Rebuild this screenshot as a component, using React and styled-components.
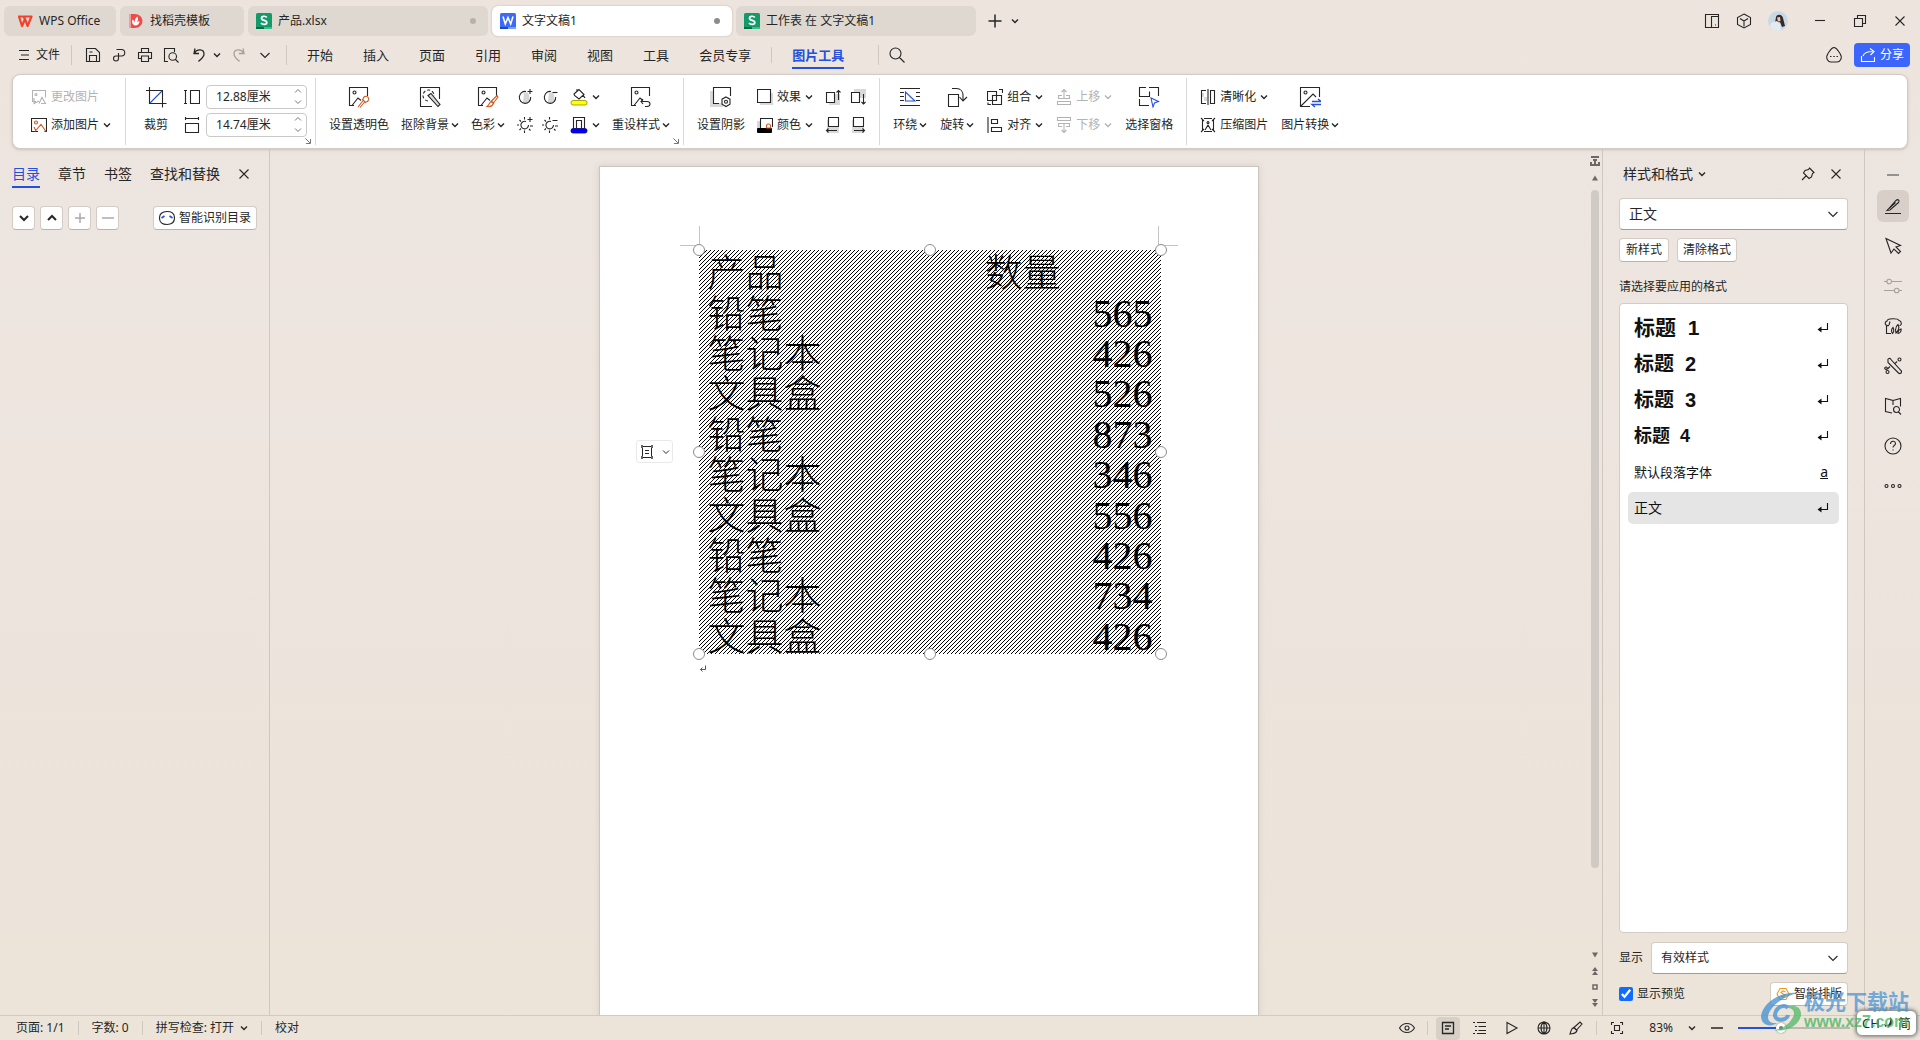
import React from "react";
import styled, { createGlobalStyle, css } from "styled-components";

const blue = "#2450dc";
const orange = "#d2591f";
const line = "#cfc8c1";

const GlobalStyle = createGlobalStyle`
    * {
        box-sizing: border-box;
    }
    body {
        margin: 0;
        background: #ede4dd;
        color: #262626;
        font-family: "Noto Sans", "Noto Sans CJK SC", sans-serif;
        font-size: 12px;
        line-height: 16px;
    }
    button, input, select {
        margin: 0;
        font: inherit;
        color: inherit;
    }
    button {
        padding: 0;
        border: 0;
        background: none;
        white-space: nowrap;
    }
    table, h1, h2, p {
        margin: 0;
        font: inherit;
    }
`;

/* icons are drawn on a grid of their own pixel size */

const picture = <path d="M18.5 9V.5H.5v18H5M3 18.5L9 11l3 2.500" />;
const shadedRound = <g><path d="M7 3.500h3.500C13 6 13 11 10.500 13.500C9 14.500 7 14 6 13z" fill="#d6d6d6" stroke="none" /><path d="M9 2.500a5.700 6 0 1 0 4.700 5.500" /></g>;

const ICONS = {
    chevron: [8, <path d="M1 2.500L4 5.500L7 2.500" strokeWidth="1.400" />],
    chevronWide: [12, <path d="M1.500 4L6 8.500L10.500 4" />],
    chevronBold: [12, <path d="M2 4L6 8L10 4" strokeWidth="2" />],
    chevronUp: [12, <path d="M2 8L6 4L10 8" strokeWidth="2" />],
    up: [8, <path d="M1 5.500L4 2.500L7 5.500" strokeWidth="1" />],
    down: [8, <path d="M1 2.500L4 5.500L7 2.500" strokeWidth="1" />],
    close: [12, <path d="M1.500 1.500L10.500 10.500M10.500 1.500L1.500 10.500" />],
    plus: [16, <path d="M8 1.500V14.500M1.500 8H14.500" strokeWidth="1.500" />],
    plusSmall: [12, <path d="M6 1V11M1 6H11" strokeWidth="1.500" />],
    minus: [12, <path d="M0 6H12" strokeWidth="1.500" />],
    minimize: [12, <path d="M1 5.500H11" />],
    restore: [14, <path d="M1.500 4.500h8v8h-8zM4.500 4.500v-3h8v8h-3" />],
    wps: [16, <g fill="none" stroke="#f3402b" strokeWidth="2.200" strokeLinejoin="round"><path d="M1 3.500h4.500M2 3.500L5 13L8 6L10.500 13L14.500 3.500H6.500L9 8" /></g>],
    daoke: [16, <g stroke="none"><path d="M1 1h6a7.500 7 0 0 1 0 14H1z" fill="#ee4b4b" /><path d="M1 1h2v14H1z" fill="#f79a9a" /><path d="M7 12.500C3.500 11.500 4 8 4.500 6.500C6 7.500 6.500 8.500 6.800 10C6.500 7 7.500 4.500 9.500 3.500C10.500 6 10 8 8.500 9.500C9.500 8.500 10.500 8 11.500 8C11.500 10.500 10 12.500 7 12.500z" fill="#fff" /></g>],
    sheet: [16, <g><rect width="16" height="16" rx="1.500" fill="#149a68" stroke="none" /><path d="M0 14h8v2H0z" fill="#0a6a46" stroke="none" /><path d="M8 14h8v2H8z" fill="#3bbd8a" stroke="none" /><path d="M10.800 4.500C9.500 2.700 5.500 2.800 5.500 5.300C5.500 8 10.800 6.800 10.800 9.500C10.800 11.900 6.500 12 5 10" stroke="#fff" strokeWidth="1.700" /></g>],
    word: [16, <g><rect width="16" height="16" rx="1.500" fill="#3e6bf6" stroke="none" /><path d="M0 14h8v2H0z" fill="#1c46c4" stroke="none" /><path d="M8 14h8v2H8z" fill="#7da1ff" stroke="none" /><path d="M3 3.500L5.300 11L8 4.500L10.700 11L13 3.500" stroke="#fff" strokeWidth="1.600" /></g>],
    panels: [16, <path d="M1.500 1.500h13v13h-13zM7.500 14.500v-11h7M11 12h1" />],
    cube: [16, <path d="M8 1L14.500 4.500V11.500L8 15L1.500 11.500V4.500zM4 5.500L8 8L12 5.500M8 8v5.500" />],
    avatar: [20, <g stroke="none"><circle cx="10" cy="10" r="10" fill="#c9d9e3" /><path d="M8 6C9 3 14 3 15 7L17 15L14 16L12 11L7 12z" fill="#33282c" /><path d="M9 6.500L12 6L12.500 10L10 10.500z" fill="#e9c6b8" /><path d="M3 12L9 10L12 13L13 19.500A10 10 0 0 1 2 15z" fill="#e3ebf0" /></g>],
    menu: [12, <path d="M1 1.500h10M3 6h8M1 10.500h10" strokeWidth="1" />],
    save: [16, <path d="M1.500 1.500h9L14.500 5.500v9h-13zM4.500 14.500V8.500h7v6M4.500 5h3" />],
    export: [16, <path d="M5.500 2.500h5a3 3 0 0 1 0 6.500H7.500V6M8 9H5a2.500 2.500 0 1 0 2.500 2.500V8" />],
    print: [16, <path d="M4.500 5V1.500h7V5M4 11.500H1.500V5.500h13v6H12M4.500 9h7v5.500h-7z" />],
    preview: [16, <path d="M5 14.500H1.500v-13h10V5M13.500 9.500a3.800 3.800 0 1 1-7.600 0a3.800 3.800 0 0 1 7.600 0M12.500 12.500L15.500 15.500" />],
    undo: [16, <path d="M4 1.500L3 6.500H8M3.200 6.200C6 1.500 13 2 13 7C13 10 10 12 7.500 14.500" strokeWidth="1.300" />],
    redo: [16, <path d="M12 1.500L13 6.500H8M12.800 6.200C10 1.500 3 2 3 7C3 10 6 12 8.500 14.500" strokeWidth="1.300" />],
    search: [16, <path d="M12 6.500a5.500 5.500 0 1 1-11 0a5.500 5.500 0 0 1 11 0M10.500 10.500L15.500 15.500" />],
    feedback: [18, <path d="M9 1.500C6 1.500 5 5 3 7.500C0 12 3 16 6 16h6c3 0 6-4 3-8.500C13 5 12 1.500 9 1.500zM5 10.500h1.500M8.300 10.500h1.500M11.500 10.500h1.500" />],
    share: [16, <path d="M1.500 9v5.500h13V10M3 9C4 6 7 4.500 12.500 4.500M10 1.500L14 4.500L10.500 8" />],
    changePic: [16, <path d="M5 12.500H1.500v-11h13v7M6 5.500a1 1 0 1 1-2 0a1 1 0 0 1 2 0M3 9v5.500L8 12M8 14.500L11 8.500L14.500 14.500H10" />],
    addPic: [16, <g><path d="M7 14.500H.5v-13h15v13h-2" /><path d="M6.500 5.500a1.500 1.500 0 1 1-3 0a1.500 1.500 0 0 1 3 0M4 14.500L10 7.500L15 14.500M3 10l2 4" stroke={orange} /></g>],
    crop: [22, <g><path d="M4.500 1v16.500h17M1 4.500h16.500v17" /><path d="M5 17L17 5" stroke={blue} /></g>],
    height: [16, <path d="M1.500 1v14M0 1.500h3M0 14.500h3M6.500 1.500h9v13h-9z" />],
    width: [16, <path d="M1 1.500h14M1.500 0v3M14.500 0v3M1.500 6.500h13v9h-13z" />],
    transparent: [22, <g><g transform="translate(1 1)">{picture}</g><path d="M8 6.500a1.500 1.500 0 1 1-3 0a1.500 1.500 0 0 1 3 0" /><path d="M10 21L15.500 14M12 21.500L17 15.500M19 10.500a2.800 2.800 0 0 1 1 4.500c-1 1-2 .500-2.500 1.500l-3-3c1-.500.500-1.500 1.500-2.500a2.800 2.800 0 0 1 3-.500z" stroke={orange} /></g>],
    cutout: [22, <g><path d="M20.500 13V1.500h-19v19H13" /><path d="M9 15a5.500 5.500 0 1 1 6-5" strokeDasharray="3 2" /><path d="M9 9.500l3-2l9 11l-2 2z" fill="#d9d9d9" /></g>],
    recolor: [22, <g><g transform="translate(1 1)">{picture}</g><path d="M8 6.500a1.500 1.500 0 1 1-3 0a1.500 1.500 0 0 1 3 0" /><path d="M14.500 15L20 9.500L21 11L16.500 17zM14 15.500l2.500 2C15 21 12 21 10 20.500C12.500 19 12 17 14 15.500z" stroke={orange} fill="#fff" /></g>],
    contrastUp: [16, <g>{shadedRound}<path d="M13 0v5M10.500 2.500h5" /></g>],
    contrastDown: [16, <g>{shadedRound}<path d="M10.500 3.500h5" /></g>],
    brightUp: [16, <path d="M9 4.500a3.800 3.800 0 1 0 2.500 3.500M7.500 0v2.500M7.500 13.500v2.500M0 8h2M13 9h3M2.500 3l1.500 1.500M2.500 13L4 11.500M12 12l1.500 1.500M13 0v5M10.500 2.500h5" />],
    brightDown: [16, <path d="M9 4.500a3.800 3.800 0 1 0 2.500 3.500M7.500 0v2.500M7.500 13.500v2.500M0 8h2M13 9h3M2.500 3l1.500 1.500M2.500 13L4 11.500M12 12l1.500 1.500M10.500 3.500h5" />],
    fill: [18, <g><path d="M4 6L9 1.500L14 6.500L9 11L4.500 7.500zM7 3V1M13 7l2 3" /><rect x="1" y="12.500" width="16" height="4.500" rx="2" fill="#ffff00" stroke="#8d8d00" strokeWidth=".8" /></g>],
    outline: [18, <g><path d="M3.500 12V1.500h11V12M6.500 12V4.500h5V12" /><rect x="1" y="12.500" width="16" height="4.500" rx="2" fill="#0000ff" stroke="#00007a" strokeWidth=".8" /></g>],
    reset: [22, <g><g transform="translate(1 1)">{picture}</g><path d="M8 6.500a1.500 1.500 0 1 1-3 0a1.500 1.500 0 0 1 3 0" /><path d="M13 13L11 15.500L13 18M11.500 15.500H17c4 0 4 5 0 5h-2" /></g>],
    shadow: [22, <g><path d="M0 5h4v12h9v4H0z" fill="#d9d9d9" stroke="none" /><path d="M9 17.500H3.500v-16h17V10M16 11l4 2.200v5L16 20.500l-4-2.300v-5zM17.500 15.800a1.500 1.500 0 1 1-3 0a1.500 1.500 0 0 1 3 0" /></g>],
    effect: [16, <g><path d="M3 4h13v12H3z" fill="#d9d9d9" stroke="none" /><path d="M.5.500h13v13H.500z" fill="#fff" /></g>],
    shadowColor: [16, <g><path d="M0 4h3v8H0z" fill="#d9d9d9" stroke="none" /><path d="M3.500 12V1.500h12V10" /><rect y="11" width="15" height="5" rx="1" fill="#000" stroke="none" /><path d="M9.500 11V9a2 2 0 0 1 4 0v2z" stroke={orange} /></g>],
    nudgeUp: [16, <g><path d="M4 5h11v11H4z" fill="#d9d9d9" stroke="none" /><path d="M1.500 3.500h8v10h-8z" fill="#fff" /><path d="M13.500 11V1.500M11.500 3.500l2-2l2 2" /></g>],
    nudgeDown: [16, <g><path d="M4 0h12v9H4z" fill="#d9d9d9" stroke="none" /><path d="M1.500 3.500h8v10h-8z" fill="#fff" /><path d="M13.500 5v10M11.500 13l2 2l2-2" /></g>],
    nudgeLeft: [16, <g><path d="M2 3h12v13H2z" fill="#d9d9d9" stroke="none" /><path d="M3.500.500h10v9h-10z" fill="#fff" /><path d="M12 13.500H1.500M3.500 11.500l-2 2l2 2" /></g>],
    nudgeRight: [16, <g><path d="M2 3h12v13H2z" fill="#d9d9d9" stroke="none" /><path d="M3.500.500h10v9h-10z" fill="#fff" /><path d="M4 13.500h10.500M12.500 11.500l2 2l-2 2" /></g>],
    wrap: [22, <g><path d="M1 2.500h20M1 6.500h4M17 6.500h4M1 10.500h4M17 10.500h4M1 14.500h4M17 14.500h4M1 19.500h20" /><path d="M6.500 6v9h9.500z" stroke={blue} /></g>],
    rotate: [22, <path d="M2.500 8.500h10v12h-10zM6 2.500h4.500c4 0 6.500 3 6.500 7V14M13.500 11l3.500 4l4-4" />],
    group: [16, <path d="M.500 2.500h9v9h-9zM5.500 6.500h9v9h-9zM12 .500h3.500V4M1 13.500v2h3" />],
    align: [16, <path d="M1 0v16M4.500 2.500h6v4h-6zM4.500 10.500h10v4h-10z" />],
    forward: [16, <path d="M8 10V1M5.500 3L8 .500L10.500 3M6 6.500H2.500v3h11v-3H10M1.500 12.500h13v3h-13z" />],
    backward: [16, <path d="M8 6v9M5.500 13L8 15.500L10.500 13M6 9.500H2.500v-3h11v3H10M1.500.500h13v3h-13z" />],
    select: [22, <g><path d="M8 1.500H1.500v9h10v-5M11 1.500h9.500V10M1.500 13v6.500H11" /><path d="M13 12l7.500 3.500l-4 1.500l-1.500 4z" stroke={blue} /></g>],
    sharpen: [16, <g><path d="M1 4h3v4H1zM4 8h3v4H4z" fill="#d9d9d9" stroke="none" /><path d="M6 1.500H1.500v13H6M10.500 1.500h4v13h-4zM8 0v16" /></g>],
    compress: [16, <path d="M4 1.500h8M4 14.500h8M1 1l3 3M15 1l-3 3M1 15l3-3M15 15l-3-3M2.500 3v10M13.500 3v10M5 13l3-5l3 5M9 5.500a1 1 0 1 1-2 0a1 1 0 0 1 2 0" />],
    convert: [22, <g><path d="M20.500 11V1.500h-19v19H11M2 20L14 8L17 11M8 6.500a1.500 1.500 0 1 1-3 0a1.500 1.500 0 0 1 3 0" /><path d="M13 15.500h9l-3-2.500M22 18.500h-9l3 2.500" stroke={blue} strokeWidth="1.400" /></g>],
    launcher: [6, <path d="M.500 .500L5 5M5.500 1v4.500H1" strokeWidth="1" />],
    recognise: [16, <g><path d="M8 1.500c5 0 7.500 2.500 7.500 6.500s-2.500 6.500-7.500 6.500S.500 12 .500 8S3 1.500 8 1.500z" /><path d="M2.500 8L5.500 6M13.500 8L10.500 6" stroke={blue} strokeWidth="1.600" /></g>],
    pin: [14, <path d="M8.500 1L13 5.500L11.500 6.500L10.500 10L8 11.500L2.500 6L4 3.500L7.500 2.500zM5 9L1 13" />],
    pen: [18, <path d="M1 16.500h16M3 13.500L12 3.500c2-2 4 0 2.500 2L6 13zM5 11.500L11.500 5.500" />],
    cursor: [18, <path d="M2 1.500L16.500 8.500L12 10l4.500 4.500l-2 2L10 12l-3 4z" />],
    sliders: [18, <path d="M0 4.500h3M8 4.500h10M0 13.500h10M15 13.500h3M7.500 4.500a2.300 2.300 0 1 1-4.600 0a2.300 2.300 0 0 1 4.600 0M15 13.500a2.300 2.300 0 1 1-4.600 0a2.300 2.300 0 0 1 4.600 0" />],
    bamboo: [18, <path d="M7 16.500H2.500V9M5 8.500C1 9.500 0 5 3 4C3 1 14 1 15 3.500C18 4 18 8.500 15.500 8.500M6 4.500L5 8M8.500 16.500c-2-3-.500-5 .500-6c1 2 1.500 4-.500 6zM12 16c-1-4 0-7 2-8.500c1.500 3 1 6-2 8.500zM14 16.500c0-2 1-4 3-4.500c.500 2-1 4.500-3 4.500z" />],
    tools: [18, <path d="M4 3.500a1.500 1.500 0 0 1 3-1L17 13.500a1.500 1.500 0 0 1-2.500 2.500L4 5.500zM10.500 7L13 4.500M6 9.500L3.500 12M17 2.500a1.500 1.500 0 1 1-3 0a1.500 1.500 0 0 1 3 0M3 10.500a1.200 1.200 0 1 1-2 0a1.200 1.200 0 0 1 2 0M5 15a1.500 1.500 0 1 1-3 0a1.500 1.500 0 0 1 3 0" />],
    book: [18, <path d="M9 8V3.500L1.500 1.500v13L8 16M9 3.500L16.500 1.500v8M15.500 12.500a3 3 0 1 1-6 0a3 3 0 0 1 6 0M14.500 15L17 17.500" />],
    help: [18, <path d="M17 9a8 8 0 1 1-16 0a8 8 0 0 1 16 0M6.500 7c0-3.500 5-3.500 5-.500c0 2-2.500 2-2.500 4M9 12.500v1" />],
    more: [18, <path d="M4 9a1.500 1.500 0 1 1-3 0a1.500 1.500 0 0 1 3 0M10.500 9a1.500 1.500 0 1 1-3 0a1.500 1.500 0 0 1 3 0M17 9a1.500 1.500 0 1 1-3 0a1.500 1.500 0 0 1 3 0" />],
    returnMark: [12, <g><path d="M10.500 1v6.500H2" /><path d="M.5 7.500L4.500 4.500v6z" fill="currentColor" stroke="none" /></g>],
    paraMark: [8, <path d="M6.500 .500v4h-5M3.500 2.500l-2 2l2 2" strokeWidth="1" />],
    layout: [14, <g strokeWidth="1"><path d="M2.500 3v8M11.500 3v8M3 1.500h8M3 12.500h8M5 5.500h4M5 8.500h4" /><path d="M1 0h2v3H1zM11 0h2v3h-2zM1 11h2v3H1zM11 11h2v3h-2z" fill="#666" stroke="none" /></g>],
    eye: [16, <path d="M.500 8C4 2 12 2 15.500 8C12 14 4 14 .500 8zM10 8a2 2 0 1 1-4 0a2 2 0 0 1 4 0" />],
    docView: [14, <path d="M1.500 1.500h11v11h-11zM4 5h6M4 8h4" strokeWidth="1.300" />],
    outlineView: [14, <path d="M0 1.500h2M4 1.500h9M2 5.500h2M5.500 5.500H13M2 9.500h2M5.500 9.500H13M0 12.500h2M4 12.500h9" />],
    play: [14, <path d="M2 1.500L12 7L2 12.500z" />],
    globe: [14, <path d="M13 7A6 6 0 1 1 1 7a6 6 0 0 1 12 0M1 7h12M7 1v12M7 1c-4 3-4 9 0 12M7 1c4 3 4 9 0 12" />],
    brush: [14, <path d="M5 6.500L11 1l2 2l-5.500 6zM4.500 6.500L8 9.500C7 13 3.500 12.500 1 13C2 11 1.500 8 4.500 6.500z" />],
    fullscreen: [14, <path d="M4 1.500H1.500V4M10 1.500h2.500V4M4 12.500H1.500V10M10 12.500h2.500V10M4.500 4.500h5v5h-5z" />],
    hexagon: [14, <g stroke="#f29a1f"><path d="M4 1.500h6L13 7l-3 5.500H4L1 7z" /><path d="M9.500 5L7 4L5 5.500L9 8L7 10L4.500 9" /></g>],
    splitView: [10, <path d="M1 0h8v2H1zM3 3h4v2H3zM0 6h2v3H0zM4 5h2v4H4zM8 6h2v3H8zM0 8h10v2H0z" fill="currentColor" stroke="none" />],
    triUp: [8, <path d="M1 6.500h6L4 1.500z" fill="currentColor" stroke="none" />],
    triDown: [8, <path d="M1 1.500h6L4 6.500z" fill="currentColor" stroke="none" />],
    pageUp: [8, <path d="M1 4h6L4 0zM1 8h6L4 4z" fill="currentColor" stroke="none" />],
    pageDown: [8, <path d="M1 0h6L4 4zM1 4h6L4 8z" fill="currentColor" stroke="none" />],
    target: [8, <path d="M2 2h4v4H2z" strokeWidth="1.500" />],
    moon: [14, <path d="M8 1c5 4 2 11-6 10c5-1 7-5 6-10zM2 8c1 3 4 4 6 3" fill="currentColor" stroke="none" />],
};

const Drawing = styled.svg`
    display: block;
    flex: none;
    fill: none;
    stroke: currentColor;
    stroke-width: 1.1;
`;

const Icon = ({ name }) => {
    const [size, shape] = ICONS[name];
    return <Drawing width={size} height={size} viewBox={`0 0 ${size} ${size}`} aria-hidden="true">{shape}</Drawing>;
};

const Window = styled.div`
    position: relative;
    display: flex;
    flex-direction: column;
    height: 100vh;
    overflow: hidden;
    background: linear-gradient(180deg, #ece4dd 0%, #ede5df 30%, #ece4d9 100%);
`;

/* title bar */

const TitleBar = styled.header`
    display: flex;
    align-items: center;
    gap: 4px;
    height: 41px;
    padding: 0 14px 0 4px;
`;

const Tab = styled.button`
    display: flex;
    align-items: center;
    gap: 6px;
    width: ${p => p.$width}px;
    height: 30px;
    padding: 0 ${p => p.$pad || 8}px;
    border-radius: 6px;
    background: #dfd8d1;
    ${p => p.$active && css`
        background: #fff;
        box-shadow: 0 0 2px #b9b1aa;
    `}
`;

const Dot = styled.span`
    width: 6px;
    height: 6px;
    margin: 0 4px 0 auto;
    border-radius: 50%;
    background: ${p => (p.$dark ? "#8c8c8c" : "#b7b1ab")};
`;

const IconRow = styled.div`
    display: flex;
    align-items: center;
    gap: ${p => p.$gap}px;
    margin-left: ${p => (p.$end ? "auto" : "0")};
`;

const IconButton = styled.button`
    display: flex;
    align-items: center;
    justify-content: center;
    gap: 6px;
    opacity: ${p => (p.disabled ? 0.35 : 1)};
`;

const NewTab = styled(IconRow)`
    padding-left: 7px;
`;

const WindowButtons = styled(IconRow)`
    padding-left: 22px;
`;

/* menu */

const MenuBar = styled.nav`
    display: flex;
    align-items: center;
    height: 28px;
    padding: 0 10px 0 18px;
`;

const FileButton = styled(IconButton)`
    margin-right: 11px;
`;

const Rule = styled.span`
    width: 1px;
    height: ${p => p.$height || 20}px;
    background: ${line};
`;

const QuickAccess = styled(IconRow)`
    padding: 0 15px 0 13px;
`;

const UndoGroup = styled(IconRow)`
    padding: 0 2px;
`;

const MenuItems = styled.div`
    display: flex;
    gap: 30px;
    padding: 0 20px;
    font-size: 13px;
`;

const MenuItem = styled.button`
    height: 28px;
    padding-top: 2px;
    border-bottom: 2px solid transparent;
    ${p => p.$active && css`
        border-color: ${blue};
        color: ${blue};
        font-weight: bold;
    `}
`;

const ActiveMenu = styled.div`
    padding: 0 34px 0 20px;
    font-size: 13px;
`;

const SearchButton = styled(IconButton)`
    margin-left: 10px;
`;

const ShareButton = styled.button`
    display: flex;
    align-items: center;
    justify-content: center;
    gap: 4px;
    width: 56px;
    height: 24px;
    border-radius: 4px;
    background: #3c66fb;
    color: #fff;
`;

/* ribbon */

const Ribbon = styled.section`
    display: flex;
    height: 75px;
    margin: 5px 12px 0 12px;
    padding: 3px 0;
    border: 1px solid #d3cbc4;
    border-radius: 8px;
    background: #fff;
    box-shadow: 0 1px 3px #c9c1ba;
`;

const Group = styled.div`
    position: relative;
    display: flex;
    align-items: center;
    gap: ${p => p.$gap || 12}px;
    padding: 0 ${p => p.$right || 13}px 2px ${p => p.$left || 13}px;
    & + & {
        border-left: 1px solid #d9d9d9;
    }
`;

const Stack = styled.div`
    display: grid;
    grid-auto-rows: 24px;
    grid-auto-columns: max-content;
    row-gap: 4px;
    column-gap: 9px;
    align-items: center;
    ${p => p.$two && "grid-template-columns: 16px 16px;"}
`;

const BigTool = styled.button`
    display: grid;
    grid-template-rows: 24px 24px;
    row-gap: 4px;
    place-items: center;
`;

const SmallTool = styled.button`
    display: flex;
    align-items: center;
    gap: 4px;
    color: ${p => (p.disabled ? "#b3b3b3" : "inherit")};
`;

const Caption = styled.span`
    display: flex;
    align-items: center;
    gap: 2px;
`;

const Launcher = styled.button`
    position: absolute;
    right: 4px;
    bottom: 1px;
    color: #777;
`;

const SizeField = styled.label`
    display: flex;
    align-items: center;
    gap: 6px;
`;

const SpinBox = styled.span`
    display: flex;
    align-items: center;
    width: 101px;
    height: 24px;
    padding-right: 4px;
    border: 1px solid #c9c9c9;
    border-radius: 4px;
`;

const SizeInput = styled.input`
    flex: 1;
    min-width: 0;
    padding: 0 0 0 9px;
    border: 0;
    background: none;
    outline: 0;
`;

const Spinners = styled.span`
    display: grid;
    gap: 3px;
    color: #777;
`;

const Tool = ({ icon, label, menu }) => (
    <BigTool>
        <Icon name={icon} />
        <Caption>{label}{menu && <Icon name="chevron" />}</Caption>
    </BigTool>
);

const Row = ({ icon, label, menu, disabled }) => (
    <SmallTool disabled={disabled} aria-label={label || icon}>
        <Icon name={icon} />
        {label}
        {menu && <Icon name="chevron" />}
    </SmallTool>
);

const Size = ({ icon, label, value }) => (
    <SizeField>
        <Icon name={icon} />
        <SpinBox>
            <SizeInput aria-label={label} defaultValue={value} />
            <Spinners>
                <Icon name="up" />
                <Icon name="down" />
            </Spinners>
        </SpinBox>
    </SizeField>
);

/* work area */

const Body = styled.div`
    display: flex;
    flex: 1;
    min-height: 0;
`;

const Outline = styled.aside`
    width: 270px;
    padding: 15px 12px;
    border-right: 1px solid ${line};
`;

const PanelTabs = styled.div`
    display: flex;
    gap: 18px;
    height: 24px;
    font-size: 14px;
`;

const PanelTab = styled.button`
    height: 24px;
    padding-bottom: 2px;
    border-bottom: 2px solid transparent;
    ${p => p.$active && css`
        border-color: ${blue};
        color: ${blue};
    `}
`;

const ClosePanel = styled(IconButton)`
    height: 20px;
`;

const PanelTools = styled.div`
    display: flex;
    gap: 5px;
    margin-top: 18px;
`;

const Card = styled.button`
    display: flex;
    align-items: center;
    justify-content: center;
    gap: 4px;
    min-width: 23px;
    height: 24px;
    padding: 0 ${p => p.$pad || 5}px;
    border: 1px solid #d3cbc4;
    border-bottom-color: #b9b3ad;
    border-radius: 4px;
    background: #fff;
    color: ${p => (p.disabled ? "#aaa" : "inherit")};
`;

const Recognise = styled(Card)`
    margin-left: auto;
`;

const Canvas = styled.main`
    display: flex;
    flex: 1;
    justify-content: center;
    min-width: 0;
    overflow: hidden;
`;

const Paper = styled.article`
    position: relative;
    align-self: flex-start;
    width: 660px;
    height: 932px;
    margin-top: 17px;
    padding: 83px 97px 0 99px;
    border: 1px solid #c9c5c1;
    background: #fff;
    box-shadow: 0 0 6px #d5ccc5;
`;

/* crop marks at the corners of the text area */
const Mark = styled.span`
    position: absolute;
    top: 59px;
    width: 20px;
    height: 20px;
    border-bottom: 1px solid #c4c4c4;
    ${p => (p.$right ? "right: 80px; border-left: 1px solid #c4c4c4;" : "left: 80px; border-right: 1px solid #c4c4c4;")}
`;

const Sheet = styled.div`
    position: relative;
    width: 462px;
`;

const Hatch = styled.svg`
    position: absolute;
    inset: 0;
    width: 100%;
    height: 100%;
`;

const SheetTable = styled.table`
    position: relative;
    width: 100%;
    height: 404px;
    border-spacing: 0;
    table-layout: fixed;
    color: #000;
    font-family: "Liberation Serif", "Noto Sans CJK SC", serif;
    font-weight: 300;
`;

const Cell = styled.td`
    padding: 6px 8px 0 9px;
    font-size: 38px;
    line-height: 32px;
    text-align: ${p => (p.$number ? "right" : "left")};
    &:first-child {
        width: 60%;
    }
`;

const Digits = styled.span`
    font-size: 40px;
`;

const Handle = styled.span`
    position: absolute;
    left: ${p => p.$x}%;
    top: ${p => p.$y}%;
    width: 12px;
    height: 12px;
    margin: -6px;
    border: 1px solid #8c8c8c;
    border-radius: 50%;
    background: #fff;
`;

const Paragraph = styled.p`
    padding: 11px 0 0;
    color: #555;
`;

const LayoutButton = styled.button`
    position: absolute;
    left: 36px;
    top: 273px;
    display: flex;
    align-items: center;
    gap: 4px;
    width: 37px;
    height: 23px;
    padding: 0 3px;
    border: 1px solid #e9e9e9;
    border-radius: 3px;
    background: #fff;
`;

const ScrollBar = styled.div`
    display: flex;
    flex-direction: column;
    align-items: center;
    gap: 8px;
    width: 15px;
    padding: 7px 0 8px;
    color: #6c6866;
`;

const Thumb = styled.span`
    width: 8px;
    height: 678px;
    margin-bottom: auto;
    border-radius: 4px;
    background: #d0cac4;
`;

const StylePanel = styled.aside`
    display: flex;
    flex-direction: column;
    width: 263px;
    padding: 13px 16px 9px;
    border: solid ${line};
    border-width: 0 1px;
`;

const PanelHead = styled.div`
    display: flex;
    align-items: center;
    gap: 5px;
    height: 24px;
    padding: 0 6px 0 4px;
    font-size: 14px;
`;

const SelectBox = styled.span`
    position: relative;
    display: flex;
    flex: ${p => (p.$grow ? 1 : "none")};
    align-items: center;
    height: 32px;
    svg {
        position: absolute;
        right: 9px;
        pointer-events: none;
    }
`;

const Select = styled.select`
    width: 100%;
    height: 100%;
    padding: 0 9px;
    appearance: none;
    border: 1px solid #d3cbc4;
    border-bottom-color: #a09b96;
    border-radius: 4px;
    background: #fff;
    font-size: ${p => p.$size}px;
`;

const StyleSelect = styled(SelectBox)`
    margin: 12px 0 8px;
`;

const StyleList = styled.ul`
    display: flex;
    flex: 1;
    flex-direction: column;
    gap: 4px;
    margin: 8px 0 9px;
    padding: 8px;
    border: 1px solid #d3cbc4;
    border-radius: 4px;
    background: #fff;
    list-style: none;
`;

const StyleItem = styled.li`
    display: flex;
    align-items: center;
    justify-content: space-between;
    height: 32px;
    padding: 0 10px 0 6px;
    border-radius: 5px;
    background: ${p => (p.$selected ? "#e5e5e5" : "none")};
    color: #111;
    font-family: ${p => (p.$bold ? "\"Liberation Sans\"" : "\"Noto Sans\"")}, "Noto Sans CJK SC", sans-serif;
    font-size: ${p => p.$size}px;
    font-weight: ${p => (p.$bold ? "bold" : "normal")};
    white-space: pre;
`;

const CharMark = styled.span`
    padding-right: 1px;
    font-size: 14px;
    text-decoration: underline;
`;

const FormatLabel = styled.h2`
    margin-top: 17px;
`;

const Line = styled.div`
    display: flex;
    align-items: center;
    gap: ${p => p.$gap || 8}px;
`;

const PreviewLine = styled(Line)`
    justify-content: space-between;
    margin-top: 8px;
`;

const Check = styled.label`
    display: flex;
    align-items: center;
    gap: 4px;
    input {
        width: 14px;
        height: 14px;
        accent-color: #0f6cff;
    }
`;

const SideBar = styled.aside`
    display: flex;
    flex-direction: column;
    align-items: center;
    gap: 8px;
    width: 55px;
    padding-top: 18px;
`;

const SideButton = styled(IconButton)`
    width: 32px;
    height: 32px;
    border-radius: 6px;
    background: ${p => (p.$active ? "#d8cfc9" : "none")};
`;

const Collapse = styled(IconButton)`
    width: 32px;
    height: 15px;
    color: #777;
`;

/* status bar */

const StatusBar = styled.footer`
    display: flex;
    align-items: center;
    gap: 13px;
    height: 25px;
    padding: 0 70px 0 16px;
    border-top: 1px solid #d2cbc0;
`;

const ViewButton = styled(IconButton)`
    width: 24px;
    height: 23px;
    border-radius: 4px;
    background: ${p => (p.$active ? "#d6d0c6" : "none")};
`;

const ZoomRow = styled(IconRow)`
    padding-left: 7px;
`;

const Zoom = styled.input`
    width: 112px;
    height: 10px;
    appearance: none;
    outline: 0;
    background: linear-gradient(${blue}, ${blue}) left center / 38% 2px no-repeat,
        linear-gradient(#bdb7b0, #bdb7b0) center / 100% 2px no-repeat;
    &::-webkit-slider-thumb {
        width: 10px;
        height: 10px;
        appearance: none;
        border: 3px solid #fff;
        border-radius: 50%;
        background: #777;
        box-shadow: 0 0 2px #777;
    }
`;

/* what floats over the corner of the window */

const InputMode = styled.div`
    position: absolute;
    right: 3px;
    bottom: 4px;
    display: flex;
    align-items: center;
    justify-content: center;
    gap: 2px;
    width: 61px;
    height: 26px;
    border: 1px solid #999;
    border-radius: 6px;
    background: #fff;
    box-shadow: 0 0 4px #555;
    font-size: 13px;
`;

const Watermark = styled.div`
    position: absolute;
    right: 11px;
    bottom: 8px;
    display: flex;
    align-items: center;
    gap: 2px;
    opacity: 0.75;
    pointer-events: none;
`;

const Brand = styled.div`
    color: #4a93d6;
    font-size: 21px;
    font-weight: bold;
    line-height: 22px;
`;

const Site = styled.div`
    color: #43b45c;
    font-family: "Liberation Sans", sans-serif;
    font-size: 16px;
    font-weight: bold;
    line-height: 20px;
`;

const tabs = [
    { icon: "wps", label: "WPS Office", width: 112, pad: 13 },
    { icon: "daoke", label: "找稻壳模板", width: 124 },
    { icon: "sheet", label: "产品.xlsx", width: 240, dot: true },
    { icon: "word", label: "文字文稿1", width: 240, dot: true, active: true },
    { icon: "sheet", label: "工作表 在 文字文稿1", width: 240 },
];

const menus = ["开始", "插入", "页面", "引用", "审阅", "视图", "工具", "会员专享"];

const products = [
    ["铅笔", 565],
    ["笔记本", 426],
    ["文具盒", 526],
    ["铅笔", 873],
    ["笔记本", 346],
    ["文具盒", 556],
    ["铅笔", 426],
    ["笔记本", 734],
    ["文具盒", 426],
];

const handles = [[0, 0], [50, 0], [100, 0], [0, 50], [100, 50], [0, 100], [50, 100], [100, 100]];

const styles = [
    { label: "标题  1", size: 21, bold: true },
    { label: "标题  2", size: 20, bold: true },
    { label: "标题  3", size: 20, bold: true },
    { label: "标题  4", size: 18, bold: true },
    { label: "默认段落字体", size: 13, char: true },
    { label: "正文", size: 14, selected: true },
];

const sideTools = ["pen", "cursor", "sliders", "bamboo", "tools", "book", "help", "more"];

const App = () => (
    <Window>
        <GlobalStyle />
        <TitleBar>
            {tabs.map(tab => (<Tab key={tab.label} $width={tab.width} $pad={tab.pad} $active={tab.active}>
                <Icon name={tab.icon} />
                {tab.label}
                {tab.dot && <Dot $dark={tab.active} />}
            </Tab>))}
            <NewTab $gap={8}>
                <IconButton aria-label="新建"><Icon name="plus" /></IconButton>
                <IconButton aria-label="标签列表"><Icon name="chevron" /></IconButton>
            </NewTab>
            <IconRow $gap={16} $end>
                <IconButton aria-label="分栏"><Icon name="panels" /></IconButton>
                <IconButton aria-label="应用"><Icon name="cube" /></IconButton>
                <IconButton aria-label="账号"><Icon name="avatar" /></IconButton>
            </IconRow>
            <WindowButtons $gap={27}>
                <IconButton aria-label="最小化"><Icon name="minimize" /></IconButton>
                <IconButton aria-label="还原"><Icon name="restore" /></IconButton>
                <IconButton aria-label="关闭"><Icon name="close" /></IconButton>
            </WindowButtons>
        </TitleBar>
        <MenuBar>
            <FileButton><Icon name="menu" />文件</FileButton>
            <Rule />
            <QuickAccess $gap={10}>
                <IconButton aria-label="保存"><Icon name="save" /></IconButton>
                <IconButton aria-label="输出"><Icon name="export" /></IconButton>
                <IconButton aria-label="打印"><Icon name="print" /></IconButton>
                <IconButton aria-label="打印预览"><Icon name="preview" /></IconButton>
                <UndoGroup $gap={10}>
                    <IconButton aria-label="撤销"><Icon name="undo" /><Icon name="chevron" /></IconButton>
                    <IconButton aria-label="恢复" disabled><Icon name="redo" /></IconButton>
                </UndoGroup>
                <IconButton aria-label="更多"><Icon name="chevronWide" /></IconButton>
            </QuickAccess>
            <Rule />
            <MenuItems>
                {menus.map(menu => <MenuItem key={menu}>{menu}</MenuItem>)}
            </MenuItems>
            <Rule $height={16} />
            <ActiveMenu><MenuItem $active>图片工具</MenuItem></ActiveMenu>
            <Rule />
            <SearchButton aria-label="搜索"><Icon name="search" /></SearchButton>
            <IconRow $gap={11} $end>
                <IconButton aria-label="反馈"><Icon name="feedback" /></IconButton>
                <ShareButton><Icon name="share" />分享</ShareButton>
            </IconRow>
        </MenuBar>
        <Ribbon>
            <Group $left={18} $right={14}>
                <Stack>
                    <Row icon="changePic" label="更改图片" disabled />
                    <Row icon="addPic" label="添加图片" menu />
                </Stack>
            </Group>
            <Group $left={18} $right={8} $gap={16}>
                <Tool icon="crop" label="裁剪" />
                <Stack>
                    <Size icon="height" label="高度" value="12.88厘米" />
                    <Size icon="width" label="宽度" value="14.74厘米" />
                </Stack>
                <Launcher aria-label="大小设置"><Icon name="launcher" /></Launcher>
            </Group>
            <Group>
                <Tool icon="transparent" label="设置透明色" />
                <Tool icon="cutout" label="抠除背景" menu />
                <Tool icon="recolor" label="色彩" menu />
                <Stack $two>
                    <Row icon="contrastUp" />
                    <Row icon="contrastDown" />
                    <Row icon="brightUp" />
                    <Row icon="brightDown" />
                </Stack>
                <Stack>
                    <Row icon="fill" menu />
                    <Row icon="outline" menu />
                </Stack>
                <Tool icon="reset" label="重设样式" menu />
                <Launcher aria-label="样式设置"><Icon name="launcher" /></Launcher>
            </Group>
            <Group>
                <Tool icon="shadow" label="设置阴影" />
                <Stack>
                    <Row icon="effect" label="效果" menu />
                    <Row icon="shadowColor" label="颜色" menu />
                </Stack>
                <Stack $two>
                    <Row icon="nudgeUp" />
                    <Row icon="nudgeDown" />
                    <Row icon="nudgeLeft" />
                    <Row icon="nudgeRight" />
                </Stack>
            </Group>
            <Group $gap={13}>
                <Tool icon="wrap" label="环绕" menu />
                <Tool icon="rotate" label="旋转" menu />
                <Stack>
                    <Row icon="group" label="组合" menu />
                    <Row icon="align" label="对齐" menu />
                </Stack>
                <Stack>
                    <Row icon="forward" label="上移" menu disabled />
                    <Row icon="backward" label="下移" menu disabled />
                </Stack>
                <Tool icon="select" label="选择窗格" />
            </Group>
            <Group $gap={13}>
                <Stack>
                    <Row icon="sharpen" label="清晰化" menu />
                    <Row icon="compress" label="压缩图片" />
                </Stack>
                <Tool icon="convert" label="图片转换" menu />
            </Group>
        </Ribbon>
        <Body>
            <Outline>
                <PanelTabs>
                    <PanelTab $active>目录</PanelTab>
                    <PanelTab>章节</PanelTab>
                    <PanelTab>书签</PanelTab>
                    <PanelTab>查找和替换</PanelTab>
                    <ClosePanel aria-label="关闭"><Icon name="close" /></ClosePanel>
                </PanelTabs>
                <PanelTools>
                    <Card $pad={4} aria-label="展开"><Icon name="chevronBold" /></Card>
                    <Card $pad={4} aria-label="收起"><Icon name="chevronUp" /></Card>
                    <Card $pad={4} aria-label="增加" disabled><Icon name="plusSmall" /></Card>
                    <Card $pad={4} aria-label="减少" disabled><Icon name="minus" /></Card>
                    <Recognise><Icon name="recognise" />智能识别目录</Recognise>
                </PanelTools>
            </Outline>
            <Canvas>
                <Paper>
                    <Mark />
                    <Mark $right />
                    <Sheet>
                        <Hatch aria-hidden="true" shapeRendering="crispEdges">
                            <defs>
                                <pattern id="hatch" width="4" height="4" patternUnits="userSpaceOnUse">
                                    <path d="M3 0h1v1h-1zM2 1h1v1h-1zM1 2h1v1h-1zM0 3h1v1h-1z" fill="#000" />
                                </pattern>
                            </defs>
                            <rect width="100%" height="100%" fill="url(#hatch)" />
                        </Hatch>
                        <SheetTable>
                            <tbody>
                                <tr>
                                    <Cell>产品</Cell>
                                    <Cell>数量</Cell>
                                </tr>
                                {products.map(([name, count], i) => (<tr key={i}>
                                    <Cell>{name}</Cell>
                                    <Cell $number><Digits>{count}</Digits></Cell>
                                </tr>))}
                            </tbody>
                        </SheetTable>
                        {handles.map(([x, y]) => <Handle key={`${x}-${y}`} $x={x} $y={y} />)}
                    </Sheet>
                    <Paragraph><Icon name="paraMark" /></Paragraph>
                    <LayoutButton aria-label="布局选项">
                        <Icon name="layout" />
                        <Rule $height={16} />
                        <Icon name="down" />
                    </LayoutButton>
                </Paper>
            </Canvas>
            <ScrollBar>
                <Icon name="splitView" />
                <Icon name="triUp" />
                <Thumb />
                <Icon name="triDown" />
                <Icon name="pageUp" />
                <Icon name="target" />
                <Icon name="pageDown" />
            </ScrollBar>
            <StylePanel>
                <PanelHead>
                    样式和格式
                    <Icon name="chevron" />
                    <IconRow $gap={15} $end>
                        <IconButton aria-label="固定"><Icon name="pin" /></IconButton>
                        <IconButton aria-label="关闭"><Icon name="close" /></IconButton>
                    </IconRow>
                </PanelHead>
                <StyleSelect>
                    <Select $size={14} aria-label="当前样式"><option>正文</option></Select>
                    <Icon name="chevronWide" />
                </StyleSelect>
                <Line>
                    <Card $pad={6}>新样式</Card>
                    <Card>清除格式</Card>
                </Line>
                <FormatLabel>请选择要应用的格式</FormatLabel>
                <StyleList>
                    {styles.map(item => (<StyleItem key={item.label} $size={item.size} $bold={item.bold} $selected={item.selected}>
                        {item.label}
                        {item.char ? <CharMark>a</CharMark> : <Icon name="returnMark" />}
                    </StyleItem>))}
                </StyleList>
                <Line>
                    <label htmlFor="shown">显示</label>
                    <SelectBox $grow>
                        <Select id="shown" $size={12}><option>有效样式</option></Select>
                        <Icon name="chevronWide" />
                    </SelectBox>
                </Line>
                <PreviewLine>
                    <Check><input type="checkbox" defaultChecked />显示预览</Check>
                    <Card><Icon name="hexagon" />智能排版</Card>
                </PreviewLine>
            </StylePanel>
            <SideBar>
                <Collapse aria-label="收起"><Icon name="minus" /></Collapse>
                {sideTools.map(tool => (<SideButton key={tool} aria-label={tool} $active={tool === "pen"} disabled={tool === "sliders"}>
                    <Icon name={tool} />
                </SideButton>))}
            </SideBar>
        </Body>
        <StatusBar>
            <span>页面: 1/1</span>
            <Rule $height={14} />
            <span>字数: 0</span>
            <Rule $height={14} />
            <IconButton>拼写检查: 打开<Icon name="chevron" /></IconButton>
            <Rule $height={14} />
            <span>校对</span>
            <IconRow $gap={8} $end>
                <ViewButton aria-label="护眼模式"><Icon name="eye" /></ViewButton>
                <Rule $height={14} />
                <ViewButton aria-label="页面视图" $active><Icon name="docView" /></ViewButton>
                <ViewButton aria-label="大纲"><Icon name="outlineView" /></ViewButton>
                <ViewButton aria-label="阅读"><Icon name="play" /></ViewButton>
                <ViewButton aria-label="Web 版式"><Icon name="globe" /></ViewButton>
                <ViewButton aria-label="写作模式"><Icon name="brush" /></ViewButton>
                <Rule $height={14} />
                <ViewButton aria-label="全屏"><Icon name="fullscreen" /></ViewButton>
            </IconRow>
            <ZoomRow $gap={15}>
                <span>83%</span>
                <Icon name="chevron" />
                <IconButton aria-label="缩小"><Icon name="minus" /></IconButton>
                <Zoom type="range" min="0" max="100" defaultValue="37" aria-label="缩放" />
            </ZoomRow>
        </StatusBar>
        <InputMode>CH<Icon name="moon" />简</InputMode>
        <Watermark>
            <Drawing width="42" height="40" viewBox="0 0 42 40" aria-hidden="true">
                <path d="M38 2C20 0 3 12 1 25C1 34 10 37 17 32C8 33 6 27 10 20C15 11 26 5 38 2z" fill="#3f8fd2" stroke="none" />
                <path d="M14 39C28 42 42 32 41 22C40 14 31 13 24 17C32 16 36 20 33 26C30 33 22 38 14 39z" fill="#4fb86a" stroke="none" />
                <path d="M15 23C17 15 25 13 28 17M15 23C14 31 27 30 28 24" stroke="#3f8fd2" strokeWidth="4" />
            </Drawing>
            <div>
                <Brand>极光下载站</Brand>
                <Site>www.xz7.com</Site>
            </div>
        </Watermark>
    </Window>
);

export default App;
